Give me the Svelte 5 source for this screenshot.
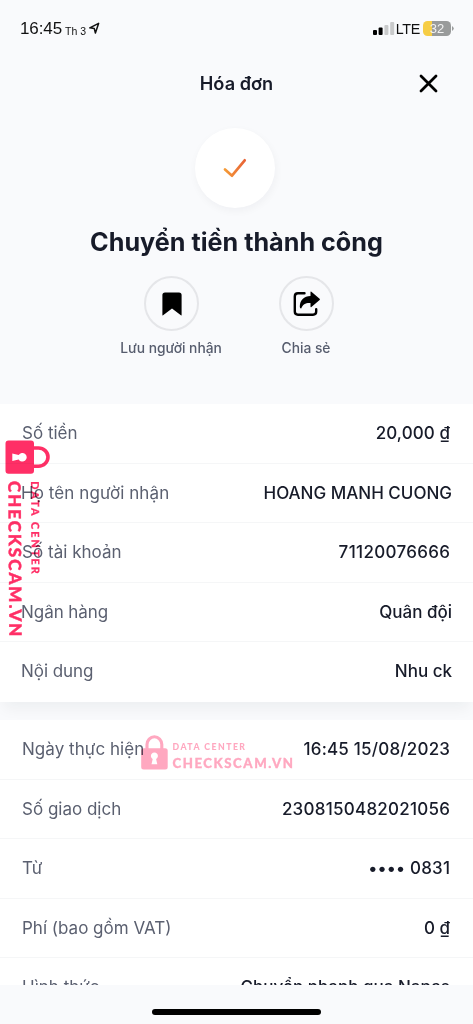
<script>
  const recipient = [
    { label: 'Số tiền', value: '20,000 ₫', ls: 0, vs: 0.1, start: 0, end: 2 },
    { label: 'Họ tên người nhận', value: 'HOANG MANH CUONG', ls: 0.08, vs: 0, start: -1, end: 0 },
    { label: 'Số tài khoản', value: '71120076666', ls: 0.03, vs: 0.32, start: 0, end: 2 },
    { label: 'Ngân hàng', value: 'Quân đội', ls: -0.05, vs: 0, start: -1, end: 0 },
    { label: 'Nội dung', value: 'Nhu ck', ls: -0.05, vs: 0, start: -1, end: 0 }
  ];
  const transaction = [
    { label: 'Ngày thực hiện', value: '16:45 15/08/2023', ls: 0.05, vs: 0.2, start: 0, end: 2 },
    { label: 'Số giao dịch', value: '2308150482021056', ls: 0, vs: 0.25, start: 0, end: 2 },
    { label: 'Từ', value: '•••• 0831', ls: 0, vs: 0.2, start: 0, end: 2 },
    { label: 'Phí (bao gồm VAT)', value: '0 ₫', ls: 0, vs: 0, start: 0, end: 2 },
    { label: 'Hình thức', value: 'Chuyển nhanh qua Napas', ls: 0, vs: 0.02, start: 0, end: 2 }
  ];
</script>

{#snippet rows(items)}
  {#each items as r}
    <div class="row">
      <span class="label" style="letter-spacing:{r.ls}px;margin-left:{r.start}px">{r.label}</span>
      <span class="value" style="letter-spacing:{r.vs}px;margin-right:{r.end - r.vs}px">{r.value}</span>
    </div>
  {/each}
{/snippet}

<main>
  <div class="status">
    <span class="time">16:45</span>
    <span class="day">Th 3</span>
    <svg class="loc" width="12" height="13" viewBox="0 0 12 13"><path d="M.8 5.8 9.6 1.4 6.4 11 5.3 6.6Z" fill="none" stroke="#111" stroke-width="1.5" stroke-linejoin="round"/></svg>
    <span class="grow"></span>
    <svg class="signal" width="22" height="14" viewBox="0 0 22 14">
      <rect x="0" y="8" width="4" height="5" rx="1" fill="#000"/>
      <rect x="5.6" y="5.6" width="4" height="7.4" rx="1" fill="#000"/>
      <rect x="11.4" y="3" width="4" height="10" rx="1" fill="#c9cacb"/>
      <rect x="17.2" y="0" width="4" height="13" rx="1" fill="#c9cacb"/>
    </svg>
    <span class="lte">LTE</span>
    <span class="battery">32</span>
    <svg class="nub" width="2" height="5" viewBox="0 0 2 5"><path d="M0 0Q3.5 2.5 0 5Z" fill="#999b9b"/></svg>
  </div>

  <header>
    <h1>Hóa đơn</h1>
    <svg width="19" height="19" viewBox="0 0 19 19"><path d="M2 2 17 17M17 2 2 17" stroke="#000" stroke-width="2.8" stroke-linecap="round"/></svg>
  </header>

  <div class="done">
    <svg width="24" height="20" viewBox="0 0 24 20">
      <defs><linearGradient id="warm" x1="0" x2="1"><stop offset="0" stop-color="#f59b36"/><stop offset="1" stop-color="#e86436"/></linearGradient></defs>
      <path d="M2 11.5 9 17.7 21.7 2.3" fill="none" stroke="url(#warm)" stroke-width="2.7" stroke-linecap="round" stroke-linejoin="round"/>
    </svg>
  </div>
  <h2>Chuyển tiền thành công</h2>

  <div class="actions">
    <div class="action">
      <div class="ring"><svg width="20" height="24" viewBox="0 0 20 24"><path d="M0.4 23V3Q0.4 .4 3 .4H17Q19.6 .4 19.6 3V23Q19.6 23.8 18.9 23.3L10 16.6 1.1 23.3Q.4 23.8 .4 23Z"/></svg></div>
      <span>Lưu người nhận</span>
    </div>
    <div class="action share">
      <div class="ring"><svg width="28" height="26" viewBox="0 0 28 26">
        <path d="M11.5 2.3H5Q1.8 2.3 1.8 5.5V20.5Q1.8 23.7 5 23.7H20Q23.2 23.7 23.2 20.5V18.3" fill="none" stroke="#000" stroke-width="2.4" stroke-linecap="round"/>
        <path d="M17.5 1.2Q17.5 0 18.4.8L26.6 7.7Q27.4 8.4 26.6 9.1L18.4 16.1Q17.5 16.8 17.5 15.6V12.1C12.5 11.8 10 13.5 8.2 17.6Q6.8 17.8 6.8 15.8C6.8 8.8 11 5.1 17.5 4.9Z"/>
      </svg></div>
      <span>Chia sẻ</span>
    </div>
  </div>

  <section class="first">{@render rows(recipient)}</section>
  <section class="second">{@render rows(transaction)}</section>
  <footer><div class="home"></div></footer>

  <svg class="mark side" width="52" height="202" viewBox="0 0 52 202">
    <path d="M34 9H38.5A9.5 9.1 0 0 1 38.5 27.2H34" fill="none" stroke="#ff2f66" stroke-width="3.6"/>
    <path fill-rule="evenodd" fill="#ff2f66" d="M8.5 1.5H31Q34 1.5 34 4.5V31.8Q34 34.8 31 34.8H8.5Q5.5 34.8 5.5 31.8V4.5Q5.5 1.5 8.5 1.5ZM12.3 14.5V22L18.7 20.4A4.3 4.3 0 1 0 18.7 16.1Z"/>
    <g font-family="Lato" font-weight="900" fill="#ff2f66">
      <text transform="translate(8.3 42) rotate(89.6)" font-size="17" stroke="#ff2f66" stroke-width=".4" textLength="155.5">CHECKSCAM.VN</text>
      <text transform="translate(31 42.3) rotate(89.6)" font-size="10.8" stroke="#ff2f66" stroke-width=".2" textLength="92.5">DATA CENTER</text>
    </g>
  </svg>
  <svg class="mark center" width="156" height="40" viewBox="0 0 156 40">
    <path d="M6 16V9.5A7.4 7.7 0 0 1 20.8 9.5V16" fill="none" stroke="#ffa8c0" stroke-width="3.1"/>
    <path fill-rule="evenodd" fill="#ffa8c0" d="M2.7 13.3H24.2Q26.7 13.3 26.7 15.8V32Q26.7 34.5 24.2 34.5H2.7Q.2 34.5 .2 32V15.8Q.2 13.3 2.7 13.3ZM10.5 29.3H16.3L15.1 24A3.5 3.5 0 1 0 11.7 24Z"/>
    <g font-family="Lato" fill="#ffa8c0" font-weight="900">
      <text x="31.5" y="15.3" font-size="8.7" textLength="72.5">DATA CENTER</text>
      <text x="31.5" y="33.2" font-size="13.2" stroke="#ffa8c0" stroke-width=".3" textLength="120.5">CHECKSCAM.VN</text>
    </g>
  </svg>
</main>

<style>
  :global(body) { margin: 0; background: #f9fafc; }
  main { position: relative; width: 473px; height: 1024px; overflow: hidden; display: flex; flex-direction: column; align-items: center; background: #f9fafc; color: #171b29; font-family: Inter, sans-serif; }
  .status { box-sizing: border-box; width: 100%; height: 56px; padding: 2px 20px 0; display: flex; align-items: center; color: #111; font-family: "Liberation Sans", sans-serif; flex: none; }
  .time { font-size: 17px; letter-spacing: -.1px; }
  .day { font-size: 10.5px; margin: 4px 3px 0 3px; }
  .loc { margin-top: -1px; }
  .grow { flex: 1; }
  .lte { font-size: 14.3px; margin: 0 3px 0 1px; letter-spacing: -.3px; }
  .battery { width: 28px; height: 15px; line-height: 15px; margin-top: -2px; border-radius: 4.5px; text-align: center; font-size: 13px; color: #f2f2f2; background: linear-gradient(90deg, #f6cd45 0 9px, #999b9b 9px); }
  .signal { margin-top: -1px; }
  .nub { margin: -2px -1px 0 1px; }
  header { width: 100%; height: 56px; display: grid; grid-template-columns: 1fr auto 1fr; align-items: center; flex: none; }
  h1 { grid-column: 2; margin: 0 0 2px; font-size: 18.2px; line-height: 24px; font-weight: 600; }
  header svg { justify-self: end; margin: 0 35px 2px 0; }
  .done { width: 80px; height: 80px; flex: none; margin: 16px 3px 0 0; border-radius: 50%; background: #fff; display: flex; align-items: center; justify-content: center; box-shadow: 1px 3px 8px rgba(20, 30, 50, .045); }
  h2 { margin: 18px 0 0; font-size: 25.2px; line-height: 32px; font-weight: 700; white-space: nowrap; }
  .actions { width: 100%; height: 128px; margin-top: 18px; display: flex; flex: none; }
  .action { width: 136px; margin-left: 103px; display: flex; flex-direction: column; align-items: center; font-size: 13.8px; line-height: 20px; font-weight: 500; color: #565c6d; white-space: nowrap; }
  .share { margin-left: -1px; }
  .ring { box-sizing: border-box; width: 55px; height: 55px; padding-left: 1px; border: 2px solid #e5e6e9; border-radius: 50%; display: flex; align-items: center; justify-content: center; margin-bottom: 7px; }
  .share .ring { padding-left: 2px; }
  section { width: 100%; background: #fff; flex: none; }
  .first { height: 298px; box-shadow: 0 10px 14px -4px rgba(20, 30, 40, .055); }
  .second { position: relative; height: 265px; margin-top: 18px; overflow: hidden; }
  .row { box-sizing: border-box; height: 59.5px; padding: 0 21px 0 22px; border-bottom: 1.5px solid #f5f6f7; display: flex; justify-content: space-between; align-items: center; font-size: 17px; line-height: 24px; white-space: nowrap; }
  .first .row:last-child { border-color: transparent; }
  .label { color: #5b6070; }
  .value { font-weight: 500; }
  footer { width: 100%; flex: 1; display: flex; justify-content: center; align-items: flex-end; }
  .home { width: 169px; height: 6px; border-radius: 3px; background: #000; margin-bottom: 9px; }
  .mark { position: absolute; mix-blend-mode: multiply; }
  .side { left: 0; top: 438.5px; }
  .center { left: 141px; top: 735px; }
</style>
